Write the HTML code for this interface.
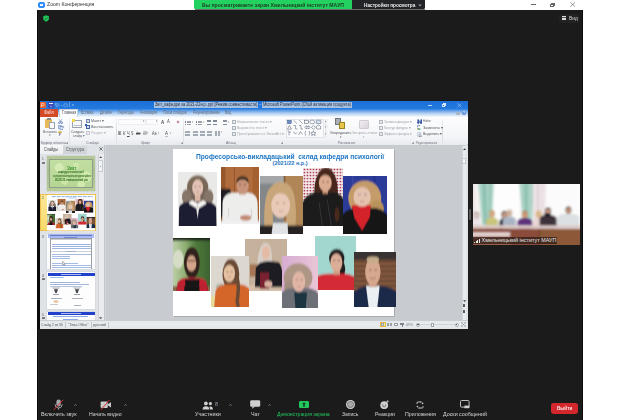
<!DOCTYPE html>
<html><head><meta charset="utf-8">
<style>
*{margin:0;padding:0;box-sizing:border-box}
html,body{width:620px;height:420px;overflow:hidden;background:#fff;font-family:"Liberation Sans",sans-serif;position:relative;-webkit-font-smoothing:antialiased}
.a{position:absolute}
.t{position:absolute;white-space:nowrap;line-height:1;transform-origin:0 0}
</style></head><body>
<div id="wrap" style="position:absolute;left:0;top:0;width:620px;height:420px"><div class="a" style="left:38.00px;top:2.00px;width:6.50px;height:6.00px;background:#2d8cff;border-radius:2px"></div>
<div class="a" style="left:39.60px;top:4.00px;width:2.60px;height:2.00px;background:#fff;border-radius:0.6px"></div>
<div class="a" style="left:42.20px;top:4.30px;width:1.10px;height:1.40px;background:#fff"></div>
<div class="t" style="left:46.70px;top:2.03px;font-size:5.87px;color:#333;transform:scaleX(0.875);">Zoom Конференция</div><div class="a" style="left:37.00px;top:10.00px;width:546.00px;height:410.00px;background:#1b1b1b;border-left:1px solid #0b0b0b;border-right:1px solid #0b0b0b"></div>
<div class="a" style="left:193.90px;top:0.00px;width:157.90px;height:9.00px;background:#23d160;border-bottom-left-radius:1.5px"></div>
<div class="a" style="left:194.50px;top:9.00px;width:230.30px;height:1.00px;background:#6e6e6e"></div>
<div class="t" style="left:201.90px;top:1.82px;font-size:6.01px;color:#1d3b22;transform:scaleX(0.856);font-weight:bold">Вы просматриваете экран Хмельницкий інститут МАУП</div><div class="a" style="left:351.80px;top:0.00px;width:73.00px;height:9.00px;background:#232427;border-bottom-right-radius:1.5px"></div>
<div class="t" style="left:363.90px;top:1.82px;font-size:6.01px;color:#ececec;transform:scaleX(0.785);font-weight:bold">Настройки просмотра</div><svg class="a" style="left:417.5px;top:3.5px" width="4" height="3"><path d="M0.3 0.5 L3.7 0.5 L2 2.5Z" fill="#9a9a9a"/></svg>
<div class="a" style="left:531.30px;top:4.30px;width:4.50px;height:0.60px;background:#666"></div>
<div class="a" style="left:550.30px;top:3.60px;width:3.70px;height:3.20px;border:0.6px solid #666"></div>
<div class="a" style="left:551.30px;top:2.80px;width:3.70px;height:3.00px;border-top:0.6px solid #666;border-right:0.6px solid #666"></div>
<svg class="a" style="left:569.8px;top:2.2px" width="5.4" height="5.0"><path d="M0.3 0.3 L5.1 4.7 M5.1 0.3 L0.3 4.7" stroke="#666" stroke-width="0.65"/></svg>
<svg class="a" style="left:42.5px;top:14.8px" width="6.2" height="7"><path d="M3.1 0.2 L6 1.3 L5.8 4.2 Q5 6 3.1 6.8 Q1.2 6 0.4 4.2 L0.2 1.3Z" fill="#22c25a"/><path d="M1.9 3.6 L2.9 4.5 L4.4 2.6" stroke="#0e5a25" stroke-width="0.6" fill="none"/></svg>
<div class="a" style="left:559.00px;top:13.50px;width:19.70px;height:9.70px;background:#222222;border-radius:3px"></div>
<div class="a" style="left:561.90px;top:15.70px;width:4.20px;height:4.60px;background:#dedede"></div>
<div class="a" style="left:561.90px;top:17.00px;width:4.20px;height:0.50px;background:#555"></div>
<div class="t" style="left:568.70px;top:15.22px;font-size:6.01px;color:#d4d4d4;transform:scaleX(0.801);">Вид</div><div class="a" style="left:38.00px;top:100.80px;width:1.70px;height:227.80px;background:#0c0c0c"></div>
<div class="a" style="left:39.70px;top:100.80px;width:428.30px;height:227.80px;background:#c8cace"></div>
<div class="a" style="left:39.70px;top:100.80px;width:428.30px;height:16.20px;background:linear-gradient(#1b6ed6 0,#237ade 7.6px,#3f8be2 8.5px,#a9c9f0 12px,#eef4fb 15.5px,#fafcfe 16.2px)"></div>
<div class="a" style="left:40.30px;top:102.00px;width:5.30px;height:5.60px;background:#e8632e;border-radius:0.5px"></div>
<svg class="a" style="left:41.2px;top:102.8px" width="3.6" height="4.2" viewBox="0 0 3.6 4.2"><path d="M0.6 4 L0.6 0.4 L2 0.4 Q3.2 0.4 3.2 1.5 Q3.2 2.6 2 2.6 L0.6 2.6" stroke="#fbe0d0" stroke-width="0.7" fill="none"/></svg>
<div class="a" style="left:48.40px;top:102.20px;width:5.20px;height:5.40px;background:#4050b8;border-radius:0.4px"></div>
<div class="a" style="left:49.40px;top:102.50px;width:3.20px;height:1.90px;background:#e8ecf8"></div>
<div class="a" style="left:49.80px;top:105.60px;width:2.40px;height:1.80px;background:#8090d0"></div>
<svg class="a" style="left:55.4px;top:102.6px" width="5" height="4" viewBox="0 0 5 4"><path d="M1 3.4 Q4.6 3.6 4.2 1.6 Q3.6 0 1.2 1 L0.6 0.2 L0.4 2.2 L2.2 2" fill="none" stroke="#8fb4e4" stroke-width="0.7"/></svg>
<div class="a" style="left:61.00px;top:104.60px;width:1.00px;height:0.60px;background:#7aa6e0"></div>
<svg class="a" style="left:63.2px;top:102.6px" width="5" height="4.6" viewBox="0 0 5 4.6"><circle cx="2.5" cy="2.4" r="1.8" fill="none" stroke="#90b6e6" stroke-width="0.7"/></svg>
<div class="a" style="left:69.40px;top:102.40px;width:0.50px;height:5.00px;background:#6c9ee0"></div>
<div class="t" style="left:71.60px;top:103.56px;font-size:3.35px;color:#dbe8f8;">▾</div><div class="a" style="left:154.40px;top:102.40px;width:103.80px;height:5.40px;background:#a8c2e2"></div>
<div class="t" style="left:155.20px;top:102.76px;font-size:4.89px;color:#2a2f3a;transform:scaleX(0.797);">Звіт_кафедри за 2021-22н.р..ppt [Режим совместимости]</div><div class="a" style="left:262.40px;top:102.40px;width:89.60px;height:5.40px;background:#a8c2e2"></div>
<div class="t" style="left:263.20px;top:102.76px;font-size:4.89px;color:#2a2f3a;transform:scaleX(0.810);">Microsoft PowerPoint (Сбой активации продукта)</div><div class="t" style="left:258.80px;top:101.93px;font-size:5.87px;color:#cfe0f5;transform:scaleX(1.333);">-</div><div class="a" style="left:427.50px;top:105.20px;width:4.00px;height:0.80px;background:#b9d3f3"></div>
<div class="a" style="left:441.70px;top:104.00px;width:3.50px;height:3.20px;border:0.7px solid #d7e6f8"></div>
<div class="a" style="left:442.60px;top:103.30px;width:3.40px;height:3.10px;border-top:0.7px solid #d7e6f8;border-right:0.7px solid #d7e6f8"></div>
<svg class="a" style="left:457.4px;top:103.0px" width="4.8" height="4.6"><path d="M0.3 0.3 L4.5 4.3 M4.5 0.3 L0.3 4.3" stroke="#a9c9ee" stroke-width="0.6"/></svg>
<div class="a" style="left:39.90px;top:108.60px;width:18.40px;height:8.20px;background:#d44a27"></div>
<div class="t" style="left:44.00px;top:110.70px;font-size:4.61px;color:#fbe3da;transform:scaleX(0.882);">Файл</div><div class="a" style="left:59.30px;top:108.60px;width:18.30px;height:8.80px;background:linear-gradient(#fdfdfe,#fbfcfd);border:0.6px solid #c9d3df;border-bottom:none"></div>
<div class="t" style="left:61.50px;top:110.70px;font-size:4.61px;color:#555a60;transform:scaleX(0.809);">Главная</div><div class="t" style="left:81.10px;top:110.70px;font-size:4.61px;color:#666d78;transform:scaleX(0.723);">Вставка</div><div class="t" style="left:99.90px;top:110.70px;font-size:4.61px;color:#666d78;transform:scaleX(0.748);">Дизайн</div><div class="t" style="left:117.90px;top:110.70px;font-size:4.61px;color:#666d78;transform:scaleX(0.735);">Переходы</div><div class="t" style="left:139.60px;top:110.70px;font-size:4.61px;color:#666d78;transform:scaleX(0.781);">Анимация</div><div class="t" style="left:162.80px;top:110.70px;font-size:4.61px;color:#666d78;transform:scaleX(0.743);">Показ слайдов</div><div class="t" style="left:192.60px;top:110.70px;font-size:4.61px;color:#666d78;transform:scaleX(0.747);">Рецензирование</div><div class="t" style="left:225.40px;top:110.70px;font-size:4.61px;color:#666d78;transform:scaleX(0.743);">Вид</div><div class="a" style="left:455.50px;top:111.80px;width:4.00px;height:2.80px;background:#aab4c0;border-radius:2px"></div>
<div class="a" style="left:462.20px;top:110.80px;width:4.20px;height:4.20px;background:#5a8ed8;border-radius:50%"></div>
<div class="t" style="left:463.30px;top:111.09px;font-size:3.91px;color:#f4f8fe;transform:scaleX(0.837);font-weight:bold">?</div><div class="a" style="left:39.70px;top:117.00px;width:428.30px;height:28.00px;background:linear-gradient(#fdfdfe,#f6f7f9 60%,#eef0f3);border-bottom:0.8px solid #c2c6cc"></div>
<div class="a" style="left:39.70px;top:140.20px;width:427.50px;height:4.40px;background:linear-gradient(#eef0f3,#e8ebee)"></div>
<div class="a" style="left:69.30px;top:118.00px;width:0.60px;height:26.50px;background:linear-gradient(#f4f5f7,#d8dce1,#e3e6ea)"></div>
<div class="a" style="left:116.00px;top:118.00px;width:0.60px;height:26.50px;background:linear-gradient(#f4f5f7,#d8dce1,#e3e6ea)"></div>
<div class="a" style="left:183.20px;top:118.00px;width:0.60px;height:26.50px;background:linear-gradient(#f4f5f7,#d8dce1,#e3e6ea)"></div>
<div class="a" style="left:284.90px;top:118.00px;width:0.60px;height:26.50px;background:linear-gradient(#f4f5f7,#d8dce1,#e3e6ea)"></div>
<div class="a" style="left:414.80px;top:118.00px;width:0.60px;height:26.50px;background:linear-gradient(#f4f5f7,#d8dce1,#e3e6ea)"></div>
<div class="a" style="left:442.00px;top:118.00px;width:0.60px;height:26.50px;background:linear-gradient(#f4f5f7,#d8dce1,#e3e6ea)"></div>
<div class="t" style="left:40.50px;top:140.69px;font-size:3.91px;color:#6d747e;transform:scaleX(0.942);">Буфер обмена</div><div class="t" style="left:86.00px;top:140.69px;font-size:3.91px;color:#6d747e;transform:scaleX(0.894);">Слайды</div><div class="t" style="left:141.20px;top:140.69px;font-size:3.91px;color:#6d747e;transform:scaleX(0.708);">Шрифт</div><div class="t" style="left:225.80px;top:140.69px;font-size:3.91px;color:#6d747e;transform:scaleX(0.884);">Абзац</div><div class="t" style="left:337.70px;top:140.69px;font-size:3.91px;color:#6d747e;transform:scaleX(0.879);">Рисование</div><div class="t" style="left:415.80px;top:140.69px;font-size:3.91px;color:#6d747e;transform:scaleX(0.712);">Редактирование</div><div class="a" style="left:66.00px;top:141.80px;width:2.40px;height:2.00px;border-right:0.5px solid #9aa1aa;border-bottom:0.5px solid #9aa1aa"></div>
<div class="a" style="left:180.70px;top:141.80px;width:2.40px;height:2.00px;border-right:0.5px solid #9aa1aa;border-bottom:0.5px solid #9aa1aa"></div>
<div class="a" style="left:281.00px;top:141.80px;width:2.40px;height:2.00px;border-right:0.5px solid #9aa1aa;border-bottom:0.5px solid #9aa1aa"></div>
<div class="a" style="left:411.50px;top:141.80px;width:2.40px;height:2.00px;border-right:0.5px solid #9aa1aa;border-bottom:0.5px solid #9aa1aa"></div>
<div class="a" style="left:45.30px;top:119.00px;width:7.20px;height:9.00px;background:#e6b95a;border-radius:0.8px"></div>
<div class="a" style="left:47.20px;top:118.40px;width:3.40px;height:1.60px;background:#8b8b8b"></div>
<div class="a" style="left:48.80px;top:121.80px;width:5.90px;height:7.00px;background:#fbfbfb;border:0.5px solid #9aa3ad"></div>
<div class="t" style="left:43.30px;top:129.85px;font-size:4.19px;color:#555a60;transform:scaleX(0.783);">Вставить</div><div class="t" style="left:49.30px;top:134.07px;font-size:3.23px;color:#555;">▾</div><svg class="a" style="left:57.8px;top:118.6px" width="5" height="5" viewBox="0 0 5 5"><path d="M1.2 0.3 L3.2 3 M3.8 0.3 L1.8 3" stroke="#5a6f9a" stroke-width="0.6"/><circle cx="1.3" cy="3.8" r="0.9" fill="none" stroke="#3a5bb0" stroke-width="0.6"/><circle cx="3.7" cy="3.8" r="0.9" fill="none" stroke="#3a5bb0" stroke-width="0.6"/></svg>
<svg class="a" style="left:57.6px;top:124.8px" width="5.4" height="5" viewBox="0 0 5.4 5"><rect x="0.3" y="0.3" width="3" height="3.2" fill="#e9eef8" stroke="#5d7cc0" stroke-width="0.5"/><rect x="2" y="1.5" width="3" height="3.2" fill="#dfe8f8" stroke="#3f64b8" stroke-width="0.5"/></svg>
<div class="t" style="left:63.00px;top:125.84px;font-size:2.79px;color:#666;transform:scaleX(0.800);">▾</div><svg class="a" style="left:57.8px;top:130.8px" width="5" height="5" viewBox="0 0 5 5"><path d="M0.5 0.5 L3.5 0.5 L3.5 2 L0.5 2Z" fill="#e6c040" stroke="#a88a20" stroke-width="0.3"/><path d="M2 2 L2 3 L1.4 4.6" stroke="#5a4ab0" stroke-width="0.8"/></svg>
<div class="a" style="left:72.00px;top:120.20px;width:10.20px;height:7.60px;background:#f7f8fa;border:0.6px solid #9aa3ad"></div>
<div class="a" style="left:71.50px;top:118.70px;width:3.80px;height:3.50px;background:#f4d94a"></div>
<div class="a" style="left:74.00px;top:125.00px;width:6.50px;height:1.20px;background:#b7c1cc"></div>
<div class="t" style="left:71.20px;top:129.85px;font-size:4.19px;color:#555a60;transform:scaleX(0.842);">Создать</div><div class="t" style="left:73.00px;top:133.73px;font-size:4.33px;color:#555a60;transform:scaleX(0.721);">слайд ▾</div><div class="a" style="left:85.50px;top:118.60px;width:4.50px;height:4.00px;background:#d4dceb;border:0.5px solid #6f86b6"></div>
<div class="t" style="left:91.20px;top:119.19px;font-size:3.91px;color:#555a60;transform:scaleX(0.905);">Макет ▾</div><div class="a" style="left:85.50px;top:124.60px;width:4.50px;height:4.20px;background:#d4dceb;border:0.5px solid #3f62ac"></div>
<div class="a" style="left:85.20px;top:124.20px;width:1.80px;height:1.60px;background:#2f5fb8"></div>
<div class="t" style="left:91.20px;top:125.09px;font-size:3.91px;color:#555a60;transform:scaleX(0.895);">Восстановить</div><div class="a" style="left:85.50px;top:131.20px;width:4.50px;height:3.80px;background:#eceef1;border:0.5px solid #c5c9cf"></div>
<div class="t" style="left:91.20px;top:131.29px;font-size:3.91px;color:#a9adb3;transform:scaleX(0.894);">Раздел ▾</div><div class="a" style="left:117.50px;top:119.30px;width:28.50px;height:5.30px;background:#fcfcfd;border:0.5px solid #eceef1"></div>
<div class="t" style="left:143.20px;top:120.16px;font-size:3.35px;color:#777;transform:scaleX(0.900);">▾</div><div class="a" style="left:146.20px;top:119.30px;width:12.30px;height:5.30px;background:#fcfcfd;border:0.5px solid #eceef1"></div>
<div class="t" style="left:156.00px;top:120.16px;font-size:3.35px;color:#777;transform:scaleX(0.900);">▾</div><div class="t" style="left:161.00px;top:119.20px;font-size:6.15px;color:#4a4a4a;transform:scaleX(0.721);font-weight:bold">A</div><div class="t" style="left:167.00px;top:120.38px;font-size:4.75px;color:#4a4a4a;transform:scaleX(0.883);">A</div><div class="a" style="left:175.60px;top:119.60px;width:4.80px;height:4.60px;background:radial-gradient(#d98a9a 30%,#bfc6cf 45%,transparent 60%)"></div>
<div class="t" style="left:117.60px;top:130.71px;font-size:5.31px;color:#4a4a4a;transform:scaleX(0.625);font-weight:bold">Ж</div><div class="t" style="left:122.60px;top:130.71px;font-size:5.31px;color:#4a4a4a;transform:scaleX(0.768);font-style:italic">К</div><div class="t" style="left:127.00px;top:130.71px;font-size:5.31px;color:#4a4a4a;transform:scaleX(0.736);text-decoration:underline">Ч</div><div class="t" style="left:130.80px;top:130.71px;font-size:5.31px;color:#4a4a4a;transform:scaleX(0.677);">S</div><div class="t" style="left:135.50px;top:130.71px;font-size:5.31px;color:#4a4a4a;transform:scaleX(0.527);text-decoration:line-through">abc</div><div class="t" style="left:142.50px;top:130.71px;font-size:5.31px;color:#4a4a4a;transform:scaleX(0.600);">AV</div><div class="t" style="left:152.00px;top:130.71px;font-size:5.31px;color:#4a4a4a;transform:scaleX(0.694);">Aa</div><div class="t" style="left:165.00px;top:130.71px;font-size:5.31px;color:#4a4a4a;transform:scaleX(0.846);">A</div><div class="a" style="left:164.60px;top:135.60px;width:3.80px;height:0.80px;background:#b9bec6"></div>
<div class="t" style="left:147.20px;top:131.96px;font-size:3.35px;color:#888;transform:scaleX(0.800);">▾</div><div class="t" style="left:158.20px;top:131.96px;font-size:3.35px;color:#888;transform:scaleX(0.800);">▾</div><div class="t" style="left:170.00px;top:131.96px;font-size:3.35px;color:#888;transform:scaleX(0.800);">▾</div><div class="a" style="left:185.30px;top:120.60px;width:1.00px;height:0.80px;background:#7d8591"></div>
<div class="a" style="left:187.10px;top:120.60px;width:4.40px;height:0.60px;background:#9aa1ab"></div>
<div class="a" style="left:185.30px;top:122.20px;width:1.00px;height:0.80px;background:#7d8591"></div>
<div class="a" style="left:187.10px;top:122.20px;width:4.40px;height:0.60px;background:#9aa1ab"></div>
<div class="a" style="left:185.30px;top:123.80px;width:1.00px;height:0.80px;background:#7d8591"></div>
<div class="a" style="left:187.10px;top:123.80px;width:4.40px;height:0.60px;background:#9aa1ab"></div>
<div class="t" style="left:192.30px;top:120.56px;font-size:3.35px;color:#888;transform:scaleX(0.800);">▾</div><div class="a" style="left:196.20px;top:120.60px;width:1.00px;height:0.80px;background:#7d8591"></div>
<div class="a" style="left:198.00px;top:120.60px;width:4.40px;height:0.60px;background:#9aa1ab"></div>
<div class="a" style="left:196.20px;top:122.20px;width:1.00px;height:0.80px;background:#7d8591"></div>
<div class="a" style="left:198.00px;top:122.20px;width:4.40px;height:0.60px;background:#9aa1ab"></div>
<div class="a" style="left:196.20px;top:123.80px;width:1.00px;height:0.80px;background:#7d8591"></div>
<div class="a" style="left:198.00px;top:123.80px;width:4.40px;height:0.60px;background:#9aa1ab"></div>
<div class="t" style="left:203.20px;top:120.56px;font-size:3.35px;color:#888;transform:scaleX(0.800);">▾</div><div class="a" style="left:207.20px;top:120.40px;width:4.20px;height:4.20px;background:repeating-linear-gradient(#7f8894 0 0.6px,transparent 0.6px 1.4px)"></div>
<div class="a" style="left:213.00px;top:120.40px;width:4.20px;height:4.20px;background:repeating-linear-gradient(#7f8894 0 0.6px,transparent 0.6px 1.4px)"></div>
<div class="a" style="left:223.00px;top:120.40px;width:4.20px;height:4.20px;background:repeating-linear-gradient(#8a929d 0 0.6px,transparent 0.6px 1.4px)"></div>
<div class="t" style="left:227.80px;top:120.56px;font-size:3.35px;color:#888;transform:scaleX(0.800);">▾</div><div class="a" style="left:185.30px;top:131.20px;width:5.00px;height:4.40px;background:repeating-linear-gradient(#a3aab4 0 0.7px,transparent 0.7px 1.5px)"></div>
<div class="a" style="left:192.60px;top:131.20px;width:5.00px;height:4.40px;background:repeating-linear-gradient(#a3aab4 0 0.7px,transparent 0.7px 1.5px)"></div>
<div class="a" style="left:199.90px;top:131.20px;width:5.00px;height:4.40px;background:repeating-linear-gradient(#a3aab4 0 0.7px,transparent 0.7px 1.5px)"></div>
<div class="a" style="left:207.20px;top:131.20px;width:5.00px;height:4.40px;background:repeating-linear-gradient(#a3aab4 0 0.7px,transparent 0.7px 1.5px)"></div>
<div class="a" style="left:215.00px;top:131.20px;width:5.50px;height:4.40px;background:repeating-linear-gradient(90deg,#a3aab4 0 2.2px,transparent 2.2px 3.2px)"></div>
<div class="t" style="left:221.00px;top:131.36px;font-size:3.35px;color:#999;transform:scaleX(0.800);">▾</div><div class="a" style="left:232.00px;top:119.60px;width:4.00px;height:4.00px;background:#e9ebef;border:0.5px solid #aeb4bc"></div>
<div class="t" style="left:237.00px;top:119.89px;font-size:3.91px;color:#a2a7ae;transform:scaleX(0.872);">Направление текста ▾</div><div class="a" style="left:232.00px;top:125.60px;width:4.00px;height:4.00px;background:#e9ebef;border:0.5px solid #aeb4bc"></div>
<div class="t" style="left:237.00px;top:125.89px;font-size:3.91px;color:#a2a7ae;transform:scaleX(0.895);">Выровнять текст ▾</div><div class="a" style="left:232.00px;top:131.60px;width:4.00px;height:4.00px;background:#e9ebef;border:0.5px solid #aeb4bc"></div>
<div class="t" style="left:237.00px;top:131.89px;font-size:3.91px;color:#a2a7ae;transform:scaleX(0.921);">Преобразовать в SmartArt ▾</div><div class="a" style="left:286.40px;top:119.30px;width:37.80px;height:18.50px;background:#fbfbfc;border:0.5px solid #e1e4e8"></div>
<svg class="a" style="left:286.4px;top:119.3px" width="38" height="19" viewBox="0 0 38 19" fill="none" stroke="#44536a" stroke-width="0.5">
<rect x="1.6" y="1.4" width="3.6" height="3.2" fill="#6f8fc4" stroke="#2f4f8a"/>
<path d="M7.5 1.2 L11 4.6 M13 1.2 L16.6 4.6"/>
<rect x="18.5" y="1.2" width="4" height="3.4"/><rect x="24" y="1.2" width="4.4" height="3.4" rx="1.2"/>
<rect x="30.2" y="1.2" width="4.8" height="3.4" rx="0.6" fill="#d6e2f2"/>
<path d="M1.4 10.2 L3.4 6.4 L5.4 10.2Z"/><path d="M7.4 6.6 L9.6 6.6 L9.6 10 L11.4 10"/><path d="M13 6.6 L15 6.6 L15 10 L17 10"/>
<path d="M18.8 8.3 L20.4 6.6 L20.4 7.6 L22.6 7.6 L22.6 6.6 L24.2 8.3 L22.6 10 L22.6 9 L20.4 9 L20.4 10 Z"/>
<path d="M25.4 8.3 L27.4 6.4 L29.4 8.3 L27.4 10.2Z"/><path d="M30.6 10 L30.6 7.2 L32.6 6.2 L34.6 7.2 L34.6 10Z"/>
<path d="M1.6 12 L3 12 L3 16.4 M3 14 L5 12.6"/><path d="M7.4 12.6 Q9.2 16.6 11 13.4"/><path d="M12.6 16 L14.4 12.6 L16.4 15.4"/>
<path d="M19.6 12 Q18.4 14.2 19.6 16.6"/><path d="M23 12 Q24.2 14.2 23 16.6"/>
<path d="M27.4 11.8 L28.2 13.6 L30 13.7 L28.6 14.8 L29.2 16.6 L27.4 15.6 L25.6 16.6 L26.2 14.8 L24.8 13.7 L26.6 13.6Z"/>
</svg>
<div class="a" style="left:324.60px;top:119.30px;width:3.00px;height:18.50px;background:#f3f4f6;border-left:0.5px solid #e1e4e8"></div>
<div class="t" style="left:325.20px;top:119.80px;font-size:3.07px;color:#888;transform:scaleX(0.900);">▴</div><div class="t" style="left:325.20px;top:126.10px;font-size:3.07px;color:#888;transform:scaleX(0.900);">▾</div><div class="t" style="left:325.20px;top:132.60px;font-size:3.07px;color:#888;transform:scaleX(0.900);">▾</div><div class="a" style="left:334.80px;top:118.30px;width:6.20px;height:6.30px;background:#a9aeb6;border:0.5px solid #6f757d"></div>
<div class="a" style="left:338.60px;top:122.20px;width:6.90px;height:6.40px;background:#e8c64a;border:0.5px solid #9c8425"></div>
<div class="t" style="left:330.00px;top:130.95px;font-size:4.19px;color:#555a60;transform:scaleX(0.855);">Упорядочить</div><div class="t" style="left:339.60px;top:135.56px;font-size:3.35px;color:#555;transform:scaleX(0.900);">▾</div><div class="a" style="left:358.70px;top:119.80px;width:10.70px;height:9.70px;background:linear-gradient(135deg,#f1eef2,#d9d4dc);border:0.5px solid #d0cbd4;border-radius:1px"></div>
<div class="t" style="left:352.00px;top:130.95px;font-size:4.19px;color:#a0a4aa;transform:scaleX(0.816);">Экспресс-стили</div><div class="t" style="left:363.00px;top:135.56px;font-size:3.35px;color:#999;transform:scaleX(0.900);">▾</div><div class="a" style="left:379.00px;top:119.80px;width:4.20px;height:4.20px;background:#e6e8ec;border:0.5px solid #b4b9c0"></div>
<div class="t" style="left:384.40px;top:120.09px;font-size:3.91px;color:#a2a7ae;transform:scaleX(0.838);">Заливка фигуры ▾</div><div class="a" style="left:379.00px;top:126.00px;width:4.20px;height:4.20px;background:#e6e8ec;border:0.5px solid #b4b9c0"></div>
<div class="t" style="left:384.40px;top:126.29px;font-size:3.91px;color:#a2a7ae;transform:scaleX(0.875);">Контур фигуры ▾</div><div class="a" style="left:379.00px;top:132.20px;width:4.20px;height:4.20px;background:#e6e8ec;border:0.5px solid #b4b9c0"></div>
<div class="t" style="left:384.40px;top:132.49px;font-size:3.91px;color:#a2a7ae;transform:scaleX(0.774);">Эффекты фигуры ▾</div><svg class="a" style="left:416.6px;top:118.8px" width="5.4" height="5.2" viewBox="0 0 5.4 5.2"><rect x="0.4" y="0.4" width="1.6" height="2.4" fill="#3a5aa8"/><rect x="3.4" y="0.4" width="1.6" height="2.4" fill="#3a5aa8"/><circle cx="1.3" cy="3.6" r="1.2" fill="#2a4a98"/><circle cx="4.1" cy="3.6" r="1.2" fill="#2a4a98"/><rect x="2" y="1.6" width="1.4" height="1.2" fill="#5a7ac0"/></svg>
<div class="t" style="left:423.00px;top:119.49px;font-size:3.91px;color:#555a60;transform:scaleX(0.672);">Найти</div><svg class="a" style="left:416.6px;top:125.4px" width="5.4" height="5.2" viewBox="0 0 5.4 5.2"><path d="M0.4 2.4 L0.4 0.6 L3 0.6" stroke="#4a6ab0" stroke-width="0.6" fill="none"/><path d="M2.4 0 L3.2 0.6 L2.4 1.2" fill="#4a6ab0"/><text x="0.2" y="5" font-size="3" font-family="Liberation Sans" font-weight="bold" fill="#2f7a2f">ac</text></svg>
<div class="t" style="left:423.00px;top:125.69px;font-size:3.91px;color:#555a60;transform:scaleX(0.969);">Заменить ▾</div><svg class="a" style="left:416.8px;top:131.6px" width="5" height="5.2" viewBox="0 0 5 5.2"><rect x="0.4" y="0.6" width="3.2" height="3.6" fill="#eef2f8" stroke="#6a86c0" stroke-width="0.5" stroke-dasharray="0.8 0.5"/><path d="M2.2 1.8 L2.2 5 L3 4.2 L3.6 5.1 L4.2 4.8 L3.6 3.9 L4.6 3.9Z" fill="#fff" stroke="#333" stroke-width="0.35"/></svg>
<div class="t" style="left:423.00px;top:131.89px;font-size:3.91px;color:#555a60;transform:scaleX(0.900);">Выделить ▾</div><div class="a" style="left:39.70px;top:145.00px;width:64.80px;height:176.00px;background:#dfe2e6"></div>
<div class="a" style="left:39.70px;top:145.00px;width:23.30px;height:9.30px;background:linear-gradient(#f7f8fa,#eceef1)"></div>
<div class="a" style="left:63.00px;top:145.60px;width:24.00px;height:8.70px;background:linear-gradient(#d5d9de,#cfd3d8)"></div>
<div class="t" style="left:44.00px;top:147.34px;font-size:5.03px;color:#444;transform:scaleX(0.750);">Слайды</div><div class="t" style="left:66.40px;top:147.34px;font-size:5.03px;color:#555;transform:scaleX(0.756);">Структура</div><svg class="a" style="left:99.2px;top:147.4px" width="3.8" height="3.8"><path d="M0.3 0.3 L3.5 3.5 M3.5 0.3 L0.3 3.5" stroke="#444" stroke-width="0.7"/></svg>
<div class="a" style="left:97.60px;top:154.30px;width:6.60px;height:166.70px;background:#e9ebee;border-left:0.5px solid #d0d4d9"></div>
<svg class="a" style="left:99.2px;top:155.6px" width="3.4" height="2.4"><path d="M0 2.2 L1.7 0.2 L3.4 2.2Z" fill="#555"/></svg>
<div class="a" style="left:98.10px;top:160.00px;width:5.30px;height:12.00px;background:linear-gradient(90deg,#fbfbfc,#eef0f3);border:0.5px solid #c7ccd2;border-radius:0.8px"></div>
<div class="a" style="left:100.20px;top:165.60px;width:1.10px;height:0.80px;background:#999"></div>
<svg class="a" style="left:99.2px;top:317.4px" width="3.4" height="2.4"><path d="M0 0.2 L1.7 2.2 L3.4 0.2Z" fill="#555"/></svg>
<div class="a" style="left:104.20px;top:145.00px;width:1.80px;height:176.00px;background:#d2d5da;border-left:0.5px solid #c2c6cc"></div>
<div class="a" style="left:40.30px;top:194.20px;width:55.90px;height:36.60px;background:linear-gradient(#fde89a,#f9d86a);border:0.5px solid #ecc24e"></div>
<div class="t" style="left:42.20px;top:156.99px;font-size:3.91px;color:#444;transform:scaleX(0.823);">1</div><div class="t" style="left:42.20px;top:195.99px;font-size:3.91px;color:#444;transform:scaleX(0.823);">2</div><div class="t" style="left:42.20px;top:234.99px;font-size:3.91px;color:#444;transform:scaleX(0.823);">3</div><div class="t" style="left:42.20px;top:273.99px;font-size:3.91px;color:#444;transform:scaleX(0.823);">4</div><div class="t" style="left:42.20px;top:312.99px;font-size:3.91px;color:#444;transform:scaleX(0.823);">5</div><div class="a" style="left:41.80px;top:161.50px;width:2.80px;height:2.00px;border:0.5px solid #777;border-radius:0.6px"></div>
<div class="a" style="left:41.80px;top:277.50px;width:2.80px;height:2.00px;border:0.5px solid #777;border-radius:0.6px"></div>
<div class="a" style="left:41.80px;top:316.50px;width:2.80px;height:2.00px;border:0.5px solid #777;border-radius:0.6px"></div>
<div class="a" style="left:47.00px;top:155.50px;width:48.00px;height:35.50px;background:linear-gradient(#b4c89a,#a9bf8c 50%,#b8cc98);box-shadow:0 0 0.8px #7a8a70"></div>
<div class="a" style="left:49.00px;top:158.50px;width:44.00px;height:29.50px;background:radial-gradient(circle at 22% 28%,#d4ecb4 0,#d4ecb4 11%,transparent 12%),radial-gradient(circle at 62% 22%,#d0e8ae 0,#d0e8ae 9%,transparent 10%),radial-gradient(circle at 86% 62%,#cfe8ac 0,#cfe8ac 13%,transparent 14%),radial-gradient(circle at 35% 78%,#cce6a8 0,#cce6a8 10%,transparent 11%),radial-gradient(circle at 74% 90%,#d2eab0 0,#d2eab0 9%,transparent 10%),linear-gradient(#c2dea2,#b6d694);border:0.6px solid #8e9e8a"></div>
<div class="t" style="left:66.50px;top:165.54px;font-size:5.03px;color:#3a962a;transform:scaleX(0.943);font-weight:bold">Звіт</div><div class="t" style="left:58.00px;top:171.16px;font-size:3.35px;color:#2c6e1c;transform:scaleX(0.800);font-weight:bold">кафедри психології</div><div class="t" style="left:53.00px;top:174.96px;font-size:3.35px;color:#2c6e1c;transform:scaleX(0.511);font-weight:bold">за результатами науково-методичної роботи</div><div class="t" style="left:55.00px;top:178.56px;font-size:3.35px;color:#2c6e1c;transform:scaleX(0.857);font-weight:bold">2021/22 навчальний рік</div><div class="a" style="left:47.00px;top:195.00px;width:48.00px;height:35.30px;background:#fdfdfd"></div>
<div class="a" style="left:53.50px;top:197.40px;width:37.50px;height:1.20px;background:#8fb6de"></div>
<div class="a" style="left:63.80px;top:199.40px;width:11.80px;height:1.00px;background:#a9c8e8"></div>
<div class="a" style="left:47.00px;top:233.70px;width:48.00px;height:35.60px;background:#fbfbfd;box-shadow:0 0 0.8px #9aa0a8"></div>
<div class="a" style="left:47.90px;top:234.40px;width:46.60px;height:3.80px;background:#a9b8f0"></div>
<div class="a" style="left:50.00px;top:235.00px;width:42.00px;height:0.70px;background:#5d76c8"></div>
<div class="a" style="left:64.00px;top:236.60px;width:13.00px;height:0.70px;background:#6f86d0"></div>
<div class="a" style="left:50.20px;top:238.20px;width:41.50px;height:31.10px;background:#fff;border:0.6px solid #9a9ea6;border-bottom:none"></div>
<div class="a" style="left:50.80px;top:238.80px;width:40.30px;height:1.00px;background:#c9ccd2"></div>
<div class="a" style="left:51.50px;top:240.60px;width:39.00px;height:9.40px;background:repeating-linear-gradient(#fff 0 0.7px,#9fb6e2 0.7px 1.5px,#fff 1.5px 2.2px)"></div>
<div class="a" style="left:50.80px;top:250.60px;width:40.30px;height:1.90px;background:#cfd2d8"></div>
<div class="a" style="left:66.00px;top:251.00px;width:10.00px;height:1.00px;background:#a5b2cc"></div>
<div class="a" style="left:51.50px;top:253.20px;width:39.00px;height:15.60px;background:repeating-linear-gradient(#fff 0 0.7px,#a6bbe4 0.7px 1.5px,#fff 1.5px 2.3px)"></div>
<div class="a" style="left:70.00px;top:256.00px;width:21.00px;height:2.50px;background:#fff"></div>
<div class="a" style="left:78.00px;top:262.00px;width:13.00px;height:2.20px;background:#fff"></div>
<svg class="a" style="left:62.4px;top:261.0px" width="4" height="5"><path d="M0.3 0.3 L0.3 4 L1.2 3.2 L2 4.6 L2.7 4.2 L2 3 L3.2 3 Z" fill="#f4f4f4" stroke="#555" stroke-width="0.4"/></svg>
<div class="a" style="left:47.00px;top:272.20px;width:48.00px;height:36.60px;background:#fdfdfd;box-shadow:0 0 0.8px #9aa0a8"></div>
<div class="a" style="left:47.50px;top:273.10px;width:47.00px;height:2.50px;background:#2242cc"></div>
<div class="a" style="left:61.00px;top:273.70px;width:20.00px;height:1.30px;background:#aab8ee"></div>
<div class="a" style="left:49.50px;top:276.60px;width:14.50px;height:0.70px;background:#9fc0ea"></div>
<div class="a" style="left:49.50px;top:278.00px;width:39.50px;height:7.60px;background:repeating-linear-gradient(#fff 0 0.6px,#a2b4dc 0.6px 1.3px,#fff 1.3px 1.9px)"></div>
<div class="a" style="left:80.00px;top:282.00px;width:9.00px;height:2.40px;background:#fdfdfd"></div>
<div class="a" style="left:50.00px;top:285.60px;width:32.00px;height:0.80px;background:#b8c4dc"></div>
<svg class="a" style="left:51.20px;top:287.3px" width="10" height="6.4" viewBox="0 0 10 6.4"><path d="M0.5 0.3 L9.5 0.3 L6 3.6 L5.6 6.2 L4.4 6.2 L4 3.6Z" fill="#c5c8cc"/><path d="M3 2.2 L7 2.2 L5.8 6 L4.2 6Z" fill="#4a4c50"/></svg>
<div class="a" style="left:53.40px;top:294.20px;width:5.60px;height:0.60px;background:#9aa2b0"></div>
<div class="a" style="left:50.70px;top:296.00px;width:11.00px;height:3.60px;background:repeating-linear-gradient(#fff 0 0.5px,#a9b0bc 0.5px 1.1px,#fff 1.1px 1.7px)"></div>
<svg class="a" style="left:72.20px;top:287.3px" width="10" height="6.4" viewBox="0 0 10 6.4"><path d="M0.5 0.3 L9.5 0.3 L6 3.6 L5.6 6.2 L4.4 6.2 L4 3.6Z" fill="#c5c8cc"/><path d="M3 2.2 L7 2.2 L5.8 6 L4.2 6Z" fill="#4a4c50"/></svg>
<div class="a" style="left:74.40px;top:294.20px;width:5.60px;height:0.60px;background:#9aa2b0"></div>
<div class="a" style="left:71.70px;top:296.00px;width:11.00px;height:3.60px;background:repeating-linear-gradient(#fff 0 0.5px,#a9b0bc 0.5px 1.1px,#fff 1.1px 1.7px)"></div>
<div class="a" style="left:53.00px;top:300.30px;width:6.20px;height:3.10px;border-radius:50%;background:radial-gradient(#e2b890,#f2dcc8 70%,transparent 72%)"></div>
<div class="a" style="left:50.00px;top:304.20px;width:8.00px;height:0.60px;background:#c4c9d2"></div>
<div class="a" style="left:74.00px;top:305.00px;width:6.90px;height:0.60px;background:#aab0ba"></div>
<div class="a" style="left:47.00px;top:311.60px;width:48.00px;height:9.40px;background:#fdfdfd;box-shadow:0 0 0.8px #9aa0a8"></div>
<div class="a" style="left:47.50px;top:312.40px;width:47.00px;height:2.60px;background:#2242cc"></div>
<div class="a" style="left:61.00px;top:313.00px;width:20.00px;height:1.40px;background:#aab8ee"></div>
<div class="a" style="left:53.00px;top:316.10px;width:35.00px;height:0.80px;background:#8faae6"></div>
<div class="a" style="left:63.00px;top:319.10px;width:15.00px;height:0.80px;background:#8faae6"></div>
<div class="a" style="left:106.00px;top:145.60px;width:356.00px;height:174.40px;background:#c8cbcf"></div>
<div class="a" style="left:462.00px;top:145.60px;width:4.20px;height:174.40px;background:#e8eaed;border-left:0.5px solid #d3d7dc"></div>
<svg class="a" style="left:462.6px;top:148.2px" width="3.2" height="2.2"><path d="M0 2 L1.6 0.2 L3.2 2Z" fill="#444"/></svg>
<div class="a" style="left:462.40px;top:157.80px;width:3.50px;height:5.80px;background:#fafbfc;border:0.5px solid #c4c9cf"></div>
<svg class="a" style="left:462.6px;top:300.0px" width="3.2" height="2.2"><path d="M0 0.2 L1.6 2 L3.2 0.2Z" fill="#444"/></svg>
<div class="a" style="left:463.00px;top:304.20px;width:2.20px;height:3.00px;background:#555;border-radius:0.6px"></div>
<div class="a" style="left:463.00px;top:309.60px;width:2.20px;height:3.00px;background:#555;border-radius:0.6px"></div>
<div class="a" style="left:466.20px;top:145.00px;width:1.80px;height:183.60px;background:#dfe3e8"></div>
<div class="a" style="left:39.70px;top:320.00px;width:428.30px;height:8.60px;background:linear-gradient(#e3e6ea,#e9ecef 40%,#e1e4e8);border-top:0.6px solid #c9cdd2"></div>
<div class="t" style="left:41.10px;top:323.05px;font-size:4.19px;color:#555;transform:scaleX(0.798);">Слайд 2 из 36</div><div class="a" style="left:64.90px;top:321.60px;width:0.50px;height:6.40px;background:#c3c7cc"></div>
<div class="t" style="left:68.20px;top:323.05px;font-size:4.19px;color:#555;transform:scaleX(0.821);">"Тема Office"</div><div class="a" style="left:90.60px;top:321.60px;width:0.50px;height:6.40px;background:#c3c7cc"></div>
<div class="t" style="left:92.70px;top:323.05px;font-size:4.19px;color:#555;transform:scaleX(0.872);">русский</div><div class="a" style="left:107.80px;top:321.60px;width:0.50px;height:6.40px;background:#c3c7cc"></div>
<div class="a" style="left:379.60px;top:321.60px;width:6.00px;height:5.80px;background:#fbe9a8;border:0.6px solid #e9b93a"></div>
<div class="a" style="left:380.90px;top:322.90px;width:3.40px;height:3.20px;background:#fdfdfd;border:0.5px solid #9aa0a7"></div>
<div class="a" style="left:387.20px;top:322.80px;width:4.60px;height:3.40px;background:repeating-linear-gradient(90deg,#9aa0a7 0 2px,transparent 2px 2.6px),repeating-linear-gradient(#e3e6ea 0 1.4px,transparent 1.4px 1.9px)"></div>
<div class="a" style="left:394.20px;top:322.80px;width:3.60px;height:3.40px;background:#f1f2f4;border:0.5px solid #9aa0a7"></div>
<div class="a" style="left:400.40px;top:322.60px;width:4.00px;height:2.40px;background:#7d838a"></div>
<div class="a" style="left:402.00px;top:325.00px;width:0.80px;height:1.60px;background:#7d838a"></div>
<div class="t" style="left:406.30px;top:323.09px;font-size:3.91px;color:#777;transform:scaleX(0.920);">69%</div><div class="a" style="left:415.80px;top:324.30px;width:39.00px;height:0.40px;background:#cfd3d8"></div>
<div class="a" style="left:416.00px;top:322.60px;width:4.00px;height:4.00px;background:#f3f4f6;border:0.5px solid #aab0b7;border-radius:50%"></div>
<div class="a" style="left:417.20px;top:324.40px;width:1.60px;height:0.50px;background:#666"></div>
<div class="a" style="left:431.30px;top:322.50px;width:2.40px;height:4.20px;background:#fafbfc;border:0.5px solid #a0a6ad;border-radius:0.5px"></div>
<div class="a" style="left:454.70px;top:322.60px;width:4.00px;height:4.00px;background:#f3f4f6;border:0.5px solid #aab0b7;border-radius:50%"></div>
<div class="a" style="left:455.90px;top:324.40px;width:1.60px;height:0.50px;background:#666"></div>
<div class="a" style="left:456.45px;top:323.80px;width:0.50px;height:1.70px;background:#666"></div>
<svg class="a" style="left:461px;top:322.2px" width="5" height="5" viewBox="0 0 5 5"><path d="M0.4 1.6 L0.4 0.4 L1.6 0.4 M3.4 0.4 L4.6 0.4 L4.6 1.6 M4.6 3.4 L4.6 4.6 L3.4 4.6 M1.6 4.6 L0.4 4.6 L0.4 3.4 M1.2 1.2 L3.8 3.8 M3.8 1.2 L1.2 3.8" stroke="#6a7078" stroke-width="0.5" fill="none"/></svg>
<svg width="0" height="0" style="position:absolute"><filter id="pb" x="-10%" y="-10%" width="120%" height="120%"><feGaussianBlur stdDeviation="1.8"/></filter></svg>
<div class="a" style="left:173.60px;top:150.10px;width:221.30px;height:166.60px;background:#a9acb1"></div>
<div class="a" style="left:173.00px;top:149.30px;width:221.00px;height:166.50px;overflow:visible">
<div class="a" style="left:0;top:0;width:221.00px;height:166.50px;background:#fff"></div>
<div class="a" style="left:4.70px;top:22.70px;width:39.30px;height:54.20px;z-index:1;overflow:hidden"><svg width="100%" height="100%" viewBox="0 0 100 100" preserveAspectRatio="none" style="display:block"><g filter="url(#pb)"><rect x="-5" y="-5" width="110" height="110" fill="#e9e9e7"/><ellipse cx="50" cy="28" rx="27" ry="22" fill="#7a6856"/><ellipse cx="50" cy="44" rx="36" ry="16" fill="#76665a"/><ellipse cx="22" cy="46" rx="12" ry="14" fill="#86766a"/><ellipse cx="78" cy="46" rx="12" ry="14" fill="#86766a"/><rect x="43" y="40" width="14" height="16" fill="#d8b4a4"/><path d="M2 104 L3 64 Q8 56 26 55 L74 55 Q92 57 97 64 L98 104Z" fill="#1a1e32"/><path d="M26 57 L47 67 L50 62 L53 67 L74 57 L64 52 L50 58 L36 52Z" fill="#f6f6f4"/><path d="M46 64 L50 86 L54 64Z" fill="#ececec"/><ellipse cx="50" cy="29" rx="14" ry="15" fill="#e2c2b2"/><path d="M42 27 L47 27 M53 27 L58 27" stroke="#7a5a50" stroke-width="1.4"/><path d="M46 37 L54 37" stroke="#b87a7a" stroke-width="1.4"/></g></svg></div>
<div class="a" style="left:47.90px;top:17.50px;width:38.50px;height:57.10px;z-index:1;overflow:hidden"><svg width="100%" height="100%" viewBox="0 0 100 100" preserveAspectRatio="none" style="display:block"><g filter="url(#pb)"><rect x="-5" y="-5" width="110" height="110" fill="#b06c3c"/><rect x="-5" y="-5" width="16" height="110" fill="#94562c"/><rect x="34" y="-5" width="2" height="60" fill="#8a5230"/><rect x="82" y="-5" width="23" height="110" fill="#a4602f"/><rect x="-5" y="38" width="30" height="50" rx="4" fill="#1c1f22"/><path d="M3 97 L4 62 Q6 47 30 45 L72 45 Q93 47 95 62 L96 97Z" fill="#ededec"/><path d="M20 72 L20 88 M78 72 L80 88" stroke="#cacaca" stroke-width="2"/><ellipse cx="64" cy="89" rx="15" ry="5" fill="#c28a72"/><rect x="47" y="40" width="17" height="8" fill="#c08a70"/><ellipse cx="56" cy="33" rx="16" ry="14" fill="#c8957a"/><path d="M40 28 Q40 16 56 16 Q72 16 72 28 Q64 22 56 22 Q48 22 40 28Z" fill="#2e2620"/><path d="M47 31 L53 31 M59 31 L65 31" stroke="#5a3a30" stroke-width="1.6"/><rect x="-5" y="95" width="110" height="10" fill="#f1f1f1"/></g></svg></div>
<div class="a" style="left:86.70px;top:26.40px;width:43.00px;height:58.80px;z-index:1;overflow:hidden"><svg width="100%" height="100%" viewBox="0 0 100 100" preserveAspectRatio="none" style="display:block"><g filter="url(#pb)"><rect x="-5" y="-5" width="110" height="110" fill="#84878a"/><rect x="-5" y="-5" width="60" height="18" fill="#a4a6a8"/><rect x="55" y="-5" width="50" height="110" fill="#b08656"/><rect x="56" y="-5" width="3" height="80" fill="#7e5a3a"/><path d="M10 88 Q8 40 20 24 Q34 8 52 10 Q74 12 80 34 Q86 60 82 86 L62 86 L62 40 L30 40 L30 88Z" fill="#c8a67a"/><ellipse cx="48" cy="50" rx="22" ry="21" fill="#e9cab8"/><path d="M24 36 Q40 24 72 34 L70 26 Q50 14 26 28Z" fill="#c8a67a"/><path d="M37 46 L44 46 M52 46 L59 46" stroke="#9a7a6a" stroke-width="1.4"/><path d="M44 60 L54 60" stroke="#c08a88" stroke-width="1.4"/><path d="M-5 105 L-5 84 L100 84 L105 105Z" fill="#262222"/><path d="M26 105 L30 80 L64 80 L66 105Z" fill="#dfe3e6"/></g></svg></div>
<div class="a" style="left:129.70px;top:18.40px;width:40.50px;height:58.10px;z-index:1;overflow:hidden"><svg width="100%" height="100%" viewBox="0 0 100 100" preserveAspectRatio="none" style="display:block"><defs><pattern id="dots" patternUnits="userSpaceOnUse" width="7.4" height="5.2"><rect width="7.4" height="5.2" fill="#f4efef"/><rect x="1.6" y="1.2" width="4.0" height="2.8" fill="#b23a4e"/></pattern></defs><rect x="-5" y="-5" width="110" height="110" fill="url(#dots)"/><g filter="url(#pb)"><ellipse cx="57" cy="40" rx="29" ry="41" fill="#46281b"/><path d="M-5 105 L-2 62 Q5 46 30 42 L82 42 Q100 48 104 62 L104 105Z" fill="#1c1c1e"/><path d="M40 60 L48 100 M60 55 L70 100" stroke="#3a3a3c" stroke-width="2"/><ellipse cx="84" cy="80" rx="6" ry="12" fill="#4a2a1c"/><rect x="48" y="34" width="14" height="10" fill="#c89478"/><ellipse cx="55" cy="26" rx="16" ry="14" fill="#dcac90"/><path d="M47 24 L53 24 M58 24 L64 24" stroke="#5a3a30" stroke-width="1.4"/></g></svg></div>
<div class="a" style="left:170.20px;top:26.40px;width:43.50px;height:58.10px;z-index:1;overflow:hidden"><svg width="100%" height="100%" viewBox="0 0 100 100" preserveAspectRatio="none" style="display:block"><g filter="url(#pb)"><rect x="-5" y="-5" width="110" height="110" fill="#2c3b98"/><rect x="20" y="-5" width="4" height="110" fill="#3848a4"/><rect x="70" y="-5" width="5" height="110" fill="#24338e"/><ellipse cx="50" cy="38" rx="38" ry="30" fill="#c49c6a"/><ellipse cx="78" cy="56" rx="16" ry="14" fill="#b8925c"/><path d="M-5 105 L-3 68 Q8 56 30 55 L75 55 Q96 58 104 70 L104 105Z" fill="#141418"/><path d="M20 50 L64 50 L62 70 L44 94 L26 72Z" fill="#d4202c"/><ellipse cx="44" cy="36" rx="20" ry="17" fill="#e4c2ae"/><path d="M34 32 L41 32 M48 32 L55 32" stroke="#7a6a80" stroke-width="1.4"/><path d="M39 44 L49 44" stroke="#c07070" stroke-width="1.5"/></g></svg></div>
<div class="a" style="left:-0.40px;top:88.80px;width:37.70px;height:52.90px;z-index:1;overflow:hidden"><svg width="100%" height="100%" viewBox="0 0 100 100" preserveAspectRatio="none" style="display:block"><g filter="url(#pb)"><defs><linearGradient id="g6" x1="0" x2="1"><stop offset="0" stop-color="#c2d2ae"/><stop offset="0.35" stop-color="#8eae72"/><stop offset="0.6" stop-color="#4e7a3c"/><stop offset="1" stop-color="#3a5e2e"/></linearGradient></defs><rect x="-5" y="-5" width="110" height="110" fill="url(#g6)"/><rect x="-5" y="-5" width="110" height="10" fill="#1e281e"/><ellipse cx="14" cy="40" rx="14" ry="18" fill="#d6dcc6"/><ellipse cx="50" cy="47" rx="21" ry="30" fill="#33241c"/><path d="M10 105 L12 84 Q20 75 35 75 L68 75 Q88 77 90 86 L92 105Z" fill="#c02232"/><path d="M32 78 L70 78 L68 105 L34 105Z" fill="#151515"/><rect x="-5" y="91" width="110" height="14" fill="#8a6a4a"/><rect x="10" y="91" width="82" height="14" fill="#151515"/><rect x="10" y="91" width="20" height="14" fill="#c02232"/><rect x="70" y="91" width="22" height="14" fill="#c02232"/><ellipse cx="49" cy="48" rx="13" ry="15" fill="#d4a48a"/><path d="M38 43 L60 43" stroke="#2a2020" stroke-width="2"/></g></svg></div>
<div class="a" style="left:37.70px;top:106.80px;width:38.20px;height:51.00px;z-index:2;overflow:hidden"><svg width="100%" height="100%" viewBox="0 0 100 100" preserveAspectRatio="none" style="display:block"><g filter="url(#pb)"><rect x="-5" y="-5" width="110" height="110" fill="#dcd7cf"/><rect x="-5" y="78" width="22" height="27" fill="#e6da9c"/><ellipse cx="25" cy="60" rx="13" ry="6" fill="#b4b8aa"/><ellipse cx="52" cy="36" rx="22" ry="30" fill="#6a4a34"/><path d="M8 105 L12 68 Q18 56 40 56 L80 56 Q102 60 104 72 L104 105Z" fill="#d4662a"/><path d="M62 30 Q76 50 70 80 Q66 95 74 100" stroke="#6a4a34" stroke-width="9" fill="none"/><ellipse cx="48" cy="34" rx="15" ry="17" fill="#e6c2a2"/><path d="M40 31 L46 31 M51 31 L57 31" stroke="#6a4a3a" stroke-width="1.4"/><path d="M43 41 L53 41" stroke="#b07060" stroke-width="1.4"/></g></svg></div>
<div class="a" style="left:72.00px;top:89.30px;width:41.80px;height:52.40px;z-index:1;overflow:hidden"><svg width="100%" height="100%" viewBox="0 0 100 100" preserveAspectRatio="none" style="display:block"><g filter="url(#pb)"><rect x="-5" y="-5" width="110" height="110" fill="#c6b29c"/><rect x="12" y="48" width="16" height="24" fill="#a67656"/><rect x="-5" y="88" width="110" height="17" fill="#d6c0aa"/><path d="M30 60 Q28 20 45 8 Q62 4 64 30 Q66 50 58 60Z" fill="#d8d0c8"/><path d="M24 92 L26 54 Q34 42 56 42 L80 44 Q92 52 90 92Z" fill="#1e1a22"/><ellipse cx="50" cy="26" rx="10" ry="13" fill="#e4bca6"/><rect x="36" y="64" width="22" height="31" fill="#7a2430"/><ellipse cx="56" cy="86" rx="10" ry="6" fill="#d8b0a0"/></g></svg></div>
<div class="a" style="left:108.80px;top:106.80px;width:35.80px;height:51.50px;z-index:3;overflow:hidden"><svg width="100%" height="100%" viewBox="0 0 100 100" preserveAspectRatio="none" style="display:block"><g filter="url(#pb)"><defs><linearGradient id="g9" x1="0" x2="1"><stop offset="0" stop-color="#d6acd2"/><stop offset="1" stop-color="#e9c6d6"/></linearGradient></defs><rect x="-5" y="-5" width="110" height="110" fill="url(#g9)"/><ellipse cx="45" cy="42" rx="40" ry="28" fill="#ae9686"/><ellipse cx="20" cy="60" rx="14" ry="14" fill="#a48e80"/><path d="M-5 105 L-3 72 Q10 62 35 62 L70 62 Q96 64 104 76 L104 105Z" fill="#6e7078"/><path d="M34 70 L70 70 L66 105 L38 105Z" fill="#1e3440"/><ellipse cx="47" cy="50" rx="18" ry="20" fill="#dfb6a6"/><path d="M38 46 L45 46 M51 46 L58 46" stroke="#7a5a50" stroke-width="1.4"/><path d="M43 60 L53 60" stroke="#c07080" stroke-width="1.6"/></g></svg></div>
<div class="a" style="left:142.40px;top:87.10px;width:40.30px;height:53.20px;z-index:1;overflow:hidden"><svg width="100%" height="100%" viewBox="0 0 100 100" preserveAspectRatio="none" style="display:block"><g filter="url(#pb)"><rect x="-5" y="-5" width="110" height="110" fill="#a2d7cf"/><ellipse cx="54" cy="42" rx="19" ry="18" fill="#221a1a"/><ellipse cx="66" cy="62" rx="9" ry="14" fill="#221a1a"/><path d="M-5 105 L-3 80 Q8 71 35 71 L75 71 Q98 73 104 82 L104 105Z" fill="#d42a36"/><rect x="46" y="60" width="16" height="13" fill="#cc9a84"/><ellipse cx="53" cy="50" rx="15" ry="17" fill="#dcae98"/><path d="M45 46 L51 46 M56 46 L62 46" stroke="#3a2a2a" stroke-width="1.4"/></g></svg></div>
<div class="a" style="left:180.60px;top:102.60px;width:42.80px;height:54.80px;z-index:2;overflow:hidden"><svg width="100%" height="100%" viewBox="0 0 100 100" preserveAspectRatio="none" style="display:block"><g filter="url(#pb)"><defs><pattern id="wood" patternUnits="userSpaceOnUse" width="100" height="9"><rect width="100" height="9" fill="#5e4232"/><rect y="1" width="100" height="5" fill="#8c5c40"/></pattern></defs><rect x="-5" y="-5" width="110" height="110" fill="url(#wood)"/><rect x="-5" y="-5" width="110" height="19" fill="#383230"/><path d="M-5 105 L-3 76 Q8 64 30 62 L64 62 Q92 64 104 76 L104 105Z" fill="#1e2a48"/><path d="M28 62 L60 62 L54 105 L35 105Z" fill="#eaf0f4"/><rect x="35" y="50" width="18" height="14" fill="#c89a80"/><ellipse cx="44" cy="36" rx="18" ry="25" fill="#d6a88e"/><ellipse cx="44" cy="14" rx="15" ry="6" fill="#c4ac8a"/><path d="M35 33 L41 33 M48 33 L54 33" stroke="#6a4a3a" stroke-width="1.4"/><path d="M37 47 Q44 51 51 47" stroke="#8a5a50" stroke-width="1.4" fill="none"/></g></svg></div>
</div>
<div class="t" style="left:195.80px;top:152.85px;font-size:7.26px;color:#1f76c4;transform:scaleX(0.919);font-weight:bold;z-index:5">Професорсько-викладацький&nbsp; склад кафедри психології</div><div class="t" style="left:272.60px;top:160.61px;font-size:5.54px;color:#1f76c4;font-weight:bold;z-index:5">(2021/22 н.р.)</div><div class="a" style="left:47px;top:195px;width:221.00px;height:166.50px;transform-origin:0 0;transform:scale(0.2172,0.2120)">
<div class="a" style="left:0;top:0;width:221.00px;height:166.50px;background:#fff"></div>
<div class="a" style="left:4.70px;top:22.70px;width:39.30px;height:54.20px;z-index:1;overflow:hidden"><svg width="100%" height="100%" viewBox="0 0 100 100" preserveAspectRatio="none" style="display:block"><g filter="url(#pb)"><rect x="-5" y="-5" width="110" height="110" fill="#e9e9e7"/><ellipse cx="50" cy="28" rx="27" ry="22" fill="#7a6856"/><ellipse cx="50" cy="44" rx="36" ry="16" fill="#76665a"/><ellipse cx="22" cy="46" rx="12" ry="14" fill="#86766a"/><ellipse cx="78" cy="46" rx="12" ry="14" fill="#86766a"/><rect x="43" y="40" width="14" height="16" fill="#d8b4a4"/><path d="M2 104 L3 64 Q8 56 26 55 L74 55 Q92 57 97 64 L98 104Z" fill="#1a1e32"/><path d="M26 57 L47 67 L50 62 L53 67 L74 57 L64 52 L50 58 L36 52Z" fill="#f6f6f4"/><path d="M46 64 L50 86 L54 64Z" fill="#ececec"/><ellipse cx="50" cy="29" rx="14" ry="15" fill="#e2c2b2"/><path d="M42 27 L47 27 M53 27 L58 27" stroke="#7a5a50" stroke-width="1.4"/><path d="M46 37 L54 37" stroke="#b87a7a" stroke-width="1.4"/></g></svg></div>
<div class="a" style="left:47.90px;top:17.50px;width:38.50px;height:57.10px;z-index:1;overflow:hidden"><svg width="100%" height="100%" viewBox="0 0 100 100" preserveAspectRatio="none" style="display:block"><g filter="url(#pb)"><rect x="-5" y="-5" width="110" height="110" fill="#b06c3c"/><rect x="-5" y="-5" width="16" height="110" fill="#94562c"/><rect x="34" y="-5" width="2" height="60" fill="#8a5230"/><rect x="82" y="-5" width="23" height="110" fill="#a4602f"/><rect x="-5" y="38" width="30" height="50" rx="4" fill="#1c1f22"/><path d="M3 97 L4 62 Q6 47 30 45 L72 45 Q93 47 95 62 L96 97Z" fill="#ededec"/><path d="M20 72 L20 88 M78 72 L80 88" stroke="#cacaca" stroke-width="2"/><ellipse cx="64" cy="89" rx="15" ry="5" fill="#c28a72"/><rect x="47" y="40" width="17" height="8" fill="#c08a70"/><ellipse cx="56" cy="33" rx="16" ry="14" fill="#c8957a"/><path d="M40 28 Q40 16 56 16 Q72 16 72 28 Q64 22 56 22 Q48 22 40 28Z" fill="#2e2620"/><path d="M47 31 L53 31 M59 31 L65 31" stroke="#5a3a30" stroke-width="1.6"/><rect x="-5" y="95" width="110" height="10" fill="#f1f1f1"/></g></svg></div>
<div class="a" style="left:86.70px;top:26.40px;width:43.00px;height:58.80px;z-index:1;overflow:hidden"><svg width="100%" height="100%" viewBox="0 0 100 100" preserveAspectRatio="none" style="display:block"><g filter="url(#pb)"><rect x="-5" y="-5" width="110" height="110" fill="#84878a"/><rect x="-5" y="-5" width="60" height="18" fill="#a4a6a8"/><rect x="55" y="-5" width="50" height="110" fill="#b08656"/><rect x="56" y="-5" width="3" height="80" fill="#7e5a3a"/><path d="M10 88 Q8 40 20 24 Q34 8 52 10 Q74 12 80 34 Q86 60 82 86 L62 86 L62 40 L30 40 L30 88Z" fill="#c8a67a"/><ellipse cx="48" cy="50" rx="22" ry="21" fill="#e9cab8"/><path d="M24 36 Q40 24 72 34 L70 26 Q50 14 26 28Z" fill="#c8a67a"/><path d="M37 46 L44 46 M52 46 L59 46" stroke="#9a7a6a" stroke-width="1.4"/><path d="M44 60 L54 60" stroke="#c08a88" stroke-width="1.4"/><path d="M-5 105 L-5 84 L100 84 L105 105Z" fill="#262222"/><path d="M26 105 L30 80 L64 80 L66 105Z" fill="#dfe3e6"/></g></svg></div>
<div class="a" style="left:129.70px;top:18.40px;width:40.50px;height:58.10px;z-index:1;overflow:hidden"><svg width="100%" height="100%" viewBox="0 0 100 100" preserveAspectRatio="none" style="display:block"><defs><pattern id="dots" patternUnits="userSpaceOnUse" width="7.4" height="5.2"><rect width="7.4" height="5.2" fill="#f4efef"/><rect x="1.6" y="1.2" width="4.0" height="2.8" fill="#b23a4e"/></pattern></defs><rect x="-5" y="-5" width="110" height="110" fill="url(#dots)"/><g filter="url(#pb)"><ellipse cx="57" cy="40" rx="29" ry="41" fill="#46281b"/><path d="M-5 105 L-2 62 Q5 46 30 42 L82 42 Q100 48 104 62 L104 105Z" fill="#1c1c1e"/><path d="M40 60 L48 100 M60 55 L70 100" stroke="#3a3a3c" stroke-width="2"/><ellipse cx="84" cy="80" rx="6" ry="12" fill="#4a2a1c"/><rect x="48" y="34" width="14" height="10" fill="#c89478"/><ellipse cx="55" cy="26" rx="16" ry="14" fill="#dcac90"/><path d="M47 24 L53 24 M58 24 L64 24" stroke="#5a3a30" stroke-width="1.4"/></g></svg></div>
<div class="a" style="left:170.20px;top:26.40px;width:43.50px;height:58.10px;z-index:1;overflow:hidden"><svg width="100%" height="100%" viewBox="0 0 100 100" preserveAspectRatio="none" style="display:block"><g filter="url(#pb)"><rect x="-5" y="-5" width="110" height="110" fill="#2c3b98"/><rect x="20" y="-5" width="4" height="110" fill="#3848a4"/><rect x="70" y="-5" width="5" height="110" fill="#24338e"/><ellipse cx="50" cy="38" rx="38" ry="30" fill="#c49c6a"/><ellipse cx="78" cy="56" rx="16" ry="14" fill="#b8925c"/><path d="M-5 105 L-3 68 Q8 56 30 55 L75 55 Q96 58 104 70 L104 105Z" fill="#141418"/><path d="M20 50 L64 50 L62 70 L44 94 L26 72Z" fill="#d4202c"/><ellipse cx="44" cy="36" rx="20" ry="17" fill="#e4c2ae"/><path d="M34 32 L41 32 M48 32 L55 32" stroke="#7a6a80" stroke-width="1.4"/><path d="M39 44 L49 44" stroke="#c07070" stroke-width="1.5"/></g></svg></div>
<div class="a" style="left:-0.40px;top:88.80px;width:37.70px;height:52.90px;z-index:1;overflow:hidden"><svg width="100%" height="100%" viewBox="0 0 100 100" preserveAspectRatio="none" style="display:block"><g filter="url(#pb)"><defs><linearGradient id="g6" x1="0" x2="1"><stop offset="0" stop-color="#c2d2ae"/><stop offset="0.35" stop-color="#8eae72"/><stop offset="0.6" stop-color="#4e7a3c"/><stop offset="1" stop-color="#3a5e2e"/></linearGradient></defs><rect x="-5" y="-5" width="110" height="110" fill="url(#g6)"/><rect x="-5" y="-5" width="110" height="10" fill="#1e281e"/><ellipse cx="14" cy="40" rx="14" ry="18" fill="#d6dcc6"/><ellipse cx="50" cy="47" rx="21" ry="30" fill="#33241c"/><path d="M10 105 L12 84 Q20 75 35 75 L68 75 Q88 77 90 86 L92 105Z" fill="#c02232"/><path d="M32 78 L70 78 L68 105 L34 105Z" fill="#151515"/><rect x="-5" y="91" width="110" height="14" fill="#8a6a4a"/><rect x="10" y="91" width="82" height="14" fill="#151515"/><rect x="10" y="91" width="20" height="14" fill="#c02232"/><rect x="70" y="91" width="22" height="14" fill="#c02232"/><ellipse cx="49" cy="48" rx="13" ry="15" fill="#d4a48a"/><path d="M38 43 L60 43" stroke="#2a2020" stroke-width="2"/></g></svg></div>
<div class="a" style="left:37.70px;top:106.80px;width:38.20px;height:51.00px;z-index:2;overflow:hidden"><svg width="100%" height="100%" viewBox="0 0 100 100" preserveAspectRatio="none" style="display:block"><g filter="url(#pb)"><rect x="-5" y="-5" width="110" height="110" fill="#dcd7cf"/><rect x="-5" y="78" width="22" height="27" fill="#e6da9c"/><ellipse cx="25" cy="60" rx="13" ry="6" fill="#b4b8aa"/><ellipse cx="52" cy="36" rx="22" ry="30" fill="#6a4a34"/><path d="M8 105 L12 68 Q18 56 40 56 L80 56 Q102 60 104 72 L104 105Z" fill="#d4662a"/><path d="M62 30 Q76 50 70 80 Q66 95 74 100" stroke="#6a4a34" stroke-width="9" fill="none"/><ellipse cx="48" cy="34" rx="15" ry="17" fill="#e6c2a2"/><path d="M40 31 L46 31 M51 31 L57 31" stroke="#6a4a3a" stroke-width="1.4"/><path d="M43 41 L53 41" stroke="#b07060" stroke-width="1.4"/></g></svg></div>
<div class="a" style="left:72.00px;top:89.30px;width:41.80px;height:52.40px;z-index:1;overflow:hidden"><svg width="100%" height="100%" viewBox="0 0 100 100" preserveAspectRatio="none" style="display:block"><g filter="url(#pb)"><rect x="-5" y="-5" width="110" height="110" fill="#c6b29c"/><rect x="12" y="48" width="16" height="24" fill="#a67656"/><rect x="-5" y="88" width="110" height="17" fill="#d6c0aa"/><path d="M30 60 Q28 20 45 8 Q62 4 64 30 Q66 50 58 60Z" fill="#d8d0c8"/><path d="M24 92 L26 54 Q34 42 56 42 L80 44 Q92 52 90 92Z" fill="#1e1a22"/><ellipse cx="50" cy="26" rx="10" ry="13" fill="#e4bca6"/><rect x="36" y="64" width="22" height="31" fill="#7a2430"/><ellipse cx="56" cy="86" rx="10" ry="6" fill="#d8b0a0"/></g></svg></div>
<div class="a" style="left:108.80px;top:106.80px;width:35.80px;height:51.50px;z-index:3;overflow:hidden"><svg width="100%" height="100%" viewBox="0 0 100 100" preserveAspectRatio="none" style="display:block"><g filter="url(#pb)"><defs><linearGradient id="g9" x1="0" x2="1"><stop offset="0" stop-color="#d6acd2"/><stop offset="1" stop-color="#e9c6d6"/></linearGradient></defs><rect x="-5" y="-5" width="110" height="110" fill="url(#g9)"/><ellipse cx="45" cy="42" rx="40" ry="28" fill="#ae9686"/><ellipse cx="20" cy="60" rx="14" ry="14" fill="#a48e80"/><path d="M-5 105 L-3 72 Q10 62 35 62 L70 62 Q96 64 104 76 L104 105Z" fill="#6e7078"/><path d="M34 70 L70 70 L66 105 L38 105Z" fill="#1e3440"/><ellipse cx="47" cy="50" rx="18" ry="20" fill="#dfb6a6"/><path d="M38 46 L45 46 M51 46 L58 46" stroke="#7a5a50" stroke-width="1.4"/><path d="M43 60 L53 60" stroke="#c07080" stroke-width="1.6"/></g></svg></div>
<div class="a" style="left:142.40px;top:87.10px;width:40.30px;height:53.20px;z-index:1;overflow:hidden"><svg width="100%" height="100%" viewBox="0 0 100 100" preserveAspectRatio="none" style="display:block"><g filter="url(#pb)"><rect x="-5" y="-5" width="110" height="110" fill="#a2d7cf"/><ellipse cx="54" cy="42" rx="19" ry="18" fill="#221a1a"/><ellipse cx="66" cy="62" rx="9" ry="14" fill="#221a1a"/><path d="M-5 105 L-3 80 Q8 71 35 71 L75 71 Q98 73 104 82 L104 105Z" fill="#d42a36"/><rect x="46" y="60" width="16" height="13" fill="#cc9a84"/><ellipse cx="53" cy="50" rx="15" ry="17" fill="#dcae98"/><path d="M45 46 L51 46 M56 46 L62 46" stroke="#3a2a2a" stroke-width="1.4"/></g></svg></div>
<div class="a" style="left:180.60px;top:102.60px;width:42.80px;height:54.80px;z-index:2;overflow:hidden"><svg width="100%" height="100%" viewBox="0 0 100 100" preserveAspectRatio="none" style="display:block"><g filter="url(#pb)"><defs><pattern id="wood" patternUnits="userSpaceOnUse" width="100" height="9"><rect width="100" height="9" fill="#5e4232"/><rect y="1" width="100" height="5" fill="#8c5c40"/></pattern></defs><rect x="-5" y="-5" width="110" height="110" fill="url(#wood)"/><rect x="-5" y="-5" width="110" height="19" fill="#383230"/><path d="M-5 105 L-3 76 Q8 64 30 62 L64 62 Q92 64 104 76 L104 105Z" fill="#1e2a48"/><path d="M28 62 L60 62 L54 105 L35 105Z" fill="#eaf0f4"/><rect x="35" y="50" width="18" height="14" fill="#c89a80"/><ellipse cx="44" cy="36" rx="18" ry="25" fill="#d6a88e"/><ellipse cx="44" cy="14" rx="15" ry="6" fill="#c4ac8a"/><path d="M35 33 L41 33 M48 33 L54 33" stroke="#6a4a3a" stroke-width="1.4"/><path d="M37 47 Q44 51 51 47" stroke="#8a5a50" stroke-width="1.4" fill="none"/></g></svg></div>
<div class="a" style="left:22px;top:5px;width:189px;height:5px;background:repeating-linear-gradient(90deg,#8ab4e0 0 9px,#c6dcf2 9px 11px,#9cc0e6 11px 20px,#e4eef8 20px 24px);z-index:5"></div><div class="a" style="left:99px;top:12px;width:36px;height:4px;background:repeating-linear-gradient(90deg,#9cc0e6 0 7px,#e4eef8 7px 9px);z-index:5"></div></div>
<div class="a" style="left:469.40px;top:209.00px;width:1.60px;height:10.80px;background:#5a5a5a;border-radius:0.8px"></div>
<div class="a" style="left:472.90px;top:184.00px;width:107.60px;height:60.60px;overflow:hidden"><svg width="107.60" height="60.60" viewBox="0 0 107.60 60.60" style="display:block"><defs><filter id="vb" x="-5%" y="-5%" width="110%" height="110%"><feGaussianBlur stdDeviation="0.9"/></filter></defs><g filter="url(#vb)"><rect x="-3" y="-3" width="115" height="70" fill="#f4f2f0"/><rect x="20" y="-3" width="27" height="42" fill="#fdfdfd"/><rect x="72" y="-3" width="40" height="42" fill="#fbfbfb"/><path d="M5 -3 L21 -3 L19 38 L12 42 L9 40 Z" fill="#aad3c6"/><path d="M9 -3 L13 -3 L14 40 L11 40Z" fill="#8cc0b0"/><path d="M16 -3 L18 -3 L17 38 L15.5 38Z" fill="#94c4b4"/><path d="M46 -3 L61 -3 L59 40 L50 40 Z" fill="#acd3c6"/><path d="M51 -3 L55 -3 L55 40 L52 40Z" fill="#90c2b2"/><path d="M60 -3 L73 -3 L72 42 L60 42Z" fill="#ece2e4"/><path d="M64 -3 L66 -3 L66 42 L64 42Z" fill="#ddd0d4"/><rect x="-3" y="-3" width="5" height="48" fill="#ebe4e6"/><path d="M-0.5 46 L-0.5 39.0 Q-0.5 35.0 3.5 35.0 Q7.5 35.0 7.5 39.0 L7.5 46Z" fill="#e9e4ea"/><ellipse cx="3.5" cy="31.4" rx="3.0" ry="3.8" fill="#b8a8a0"/><ellipse cx="3.5" cy="31.9" rx="2.2" ry="3.0" fill="#d8c8c8"/><path d="M13.0 46 L13.0 37.4 Q13.0 33.4 19.0 33.4 Q25.0 33.4 25.0 37.4 L25.0 46Z" fill="#c8c47a"/><ellipse cx="19.0" cy="29.8" rx="3.0" ry="3.8" fill="#c8a060"/><ellipse cx="19.0" cy="30.3" rx="2.2" ry="3.0" fill="#d4a888"/><path d="M26.4 46 L26.4 38.2 Q26.4 34.2 31.4 34.2 Q36.4 34.2 36.4 38.2 L36.4 46Z" fill="#25222c"/><ellipse cx="31.4" cy="30.6" rx="3.0" ry="3.8" fill="#3a2a26"/><ellipse cx="31.4" cy="31.1" rx="2.2" ry="3.0" fill="#c89a80"/><path d="M29.9 46 L29.9 36.6 Q29.9 32.6 36.4 32.6 Q42.9 32.6 42.9 36.6 L42.9 46Z" fill="#a9b4c4"/><ellipse cx="36.4" cy="29.0" rx="3.0" ry="3.8" fill="#d8c0b0"/><ellipse cx="36.4" cy="29.5" rx="2.2" ry="3.0" fill="#cfae9a"/><path d="M44.3 46 L44.3 38.0 Q44.3 34.0 51.8 34.0 Q59.3 34.0 59.3 38.0 L59.3 46Z" fill="#5e327e"/><ellipse cx="51.8" cy="30.4" rx="3.0" ry="3.8" fill="#b87a4a"/><ellipse cx="51.8" cy="30.9" rx="2.2" ry="3.0" fill="#d09a7a"/><path d="M60.2 46 L60.2 37.8 Q60.2 33.8 65.7 33.8 Q71.2 33.8 71.2 37.8 L71.2 46Z" fill="#ead8d4"/><ellipse cx="65.7" cy="30.2" rx="3.0" ry="3.8" fill="#d8b070"/><ellipse cx="65.7" cy="30.7" rx="2.2" ry="3.0" fill="#dcb890"/><path d="M66.6 46 L66.6 35.0 Q66.6 31.0 75.1 31.0 Q83.6 31.0 83.6 35.0 L83.6 46Z" fill="#3c303a"/><ellipse cx="75.1" cy="27.4" rx="3.0" ry="3.8" fill="#2e2022"/><ellipse cx="75.1" cy="27.9" rx="2.2" ry="3.0" fill="#d0a088"/><path d="M84.4 46 L84.4 33.7 Q84.4 29.7 95.4 29.7 Q106.4 29.7 106.4 33.7 L106.4 46Z" fill="#dde0e2"/><ellipse cx="95.4" cy="26.1" rx="3.0" ry="3.8" fill="#6a5a50"/><ellipse cx="95.4" cy="26.6" rx="2.2" ry="3.0" fill="#c09078"/><rect x="71.5" y="29" width="6" height="3.5" fill="#18181c"/><path d="M-3 41 L112 41.6 L112 45 L-3 44.6Z" fill="#dccbc8"/><path d="M-3 44.6 L112 45 L112 64 L-3 64Z" fill="#8a4c3a"/><rect x="66" y="45" width="46" height="20" fill="#8c5838"/><rect x="66" y="45" width="0.8" height="20" fill="#5e3420"/><path d="M-3 48.3 L37 48.3 L37 52.7 L-3 52.7Z" fill="#e4d4d4"/><path d="M-3 52.7 L37 52.7 L37 64 L-3 64Z" fill="#9a6048"/></g></svg></div>
<div class="a" style="left:472.90px;top:237.20px;width:84.50px;height:7.10px;background:rgba(42,26,22,0.72)"></div>
<div class="a" style="left:474.40px;top:241.60px;width:0.90px;height:1.40px;background:#e6e6e6"></div>
<div class="a" style="left:475.85px;top:240.80px;width:0.90px;height:2.20px;background:#e6e6e6"></div>
<div class="a" style="left:477.30px;top:240.00px;width:0.90px;height:3.00px;background:#e6e6e6"></div>
<div class="a" style="left:478.75px;top:239.20px;width:0.90px;height:3.80px;background:#e6e6e6"></div>
<div class="t" style="left:481.60px;top:238.22px;font-size:5.41px;color:#e8e8e8;">Хмельницький інститут МАУП</div><svg class="a" style="left:53.2px;top:398.6px" width="11" height="11.5" viewBox="0 0 11 11.5"><rect x="3.4" y="0.6" width="4.4" height="6.8" rx="2.2" fill="#a8a8a8"/><path d="M2 5.2 Q2 9 5.6 9 Q9.2 9 9.2 5.2" stroke="#a8a8a8" stroke-width="0.9" fill="none"/><path d="M5.6 9 L5.6 10.8" stroke="#a8a8a8" stroke-width="0.9"/><path d="M0.8 10.8 L10.2 0.8" stroke="#d2303a" stroke-width="1.0"/></svg>
<svg class="a" style="left:73.8px;top:403.6px" width="3" height="2"><path d="M0.3 1.7 L1.5 0.4 L2.7 1.7" stroke="#aaa" stroke-width="0.6" fill="none"/></svg>
<div class="t" style="left:41.00px;top:411.40px;font-size:6.15px;color:#d4d4d4;transform:scaleX(0.867);">Включить звук</div><svg class="a" style="left:99.6px;top:398.6px" width="12" height="11.5" viewBox="0 0 12 11.5"><rect x="0.6" y="2.6" width="7.2" height="6.4" rx="1" fill="#cacaca"/><path d="M8 5 L11 3.2 L11 8.4 L8 6.6Z" fill="#cacaca"/><path d="M1 10.8 L9.6 0.8" stroke="#d2303a" stroke-width="1.0"/></svg>
<svg class="a" style="left:124.3px;top:403.6px" width="3" height="2"><path d="M0.3 1.7 L1.5 0.4 L2.7 1.7" stroke="#aaa" stroke-width="0.6" fill="none"/></svg>
<div class="t" style="left:89.00px;top:411.40px;font-size:6.15px;color:#d4d4d4;transform:scaleX(0.838);">Начать видео</div><svg class="a" style="left:202.0px;top:400.6px" width="11.5" height="9" viewBox="0 0 11.5 9"><circle cx="3.9" cy="2.4" r="1.9" fill="#d0d0d0"/><circle cx="8.4" cy="2.6" r="1.6" fill="#d0d0d0"/><path d="M0.6 8.4 Q0.6 5.2 3.9 5.2 Q7.2 5.2 7.2 8.4Z" fill="#d0d0d0"/><path d="M7.9 8.4 L10.9 8.4 Q10.9 5.5 8.4 5.5 Q7.6 5.5 7.2 5.8 Q7.9 6.8 7.9 8.4Z" fill="#d0d0d0"/></svg>
<div class="t" style="left:215.00px;top:400.60px;font-size:6.15px;color:#9aa0b0;transform:scaleX(0.877);">8</div><svg class="a" style="left:229.3px;top:403.6px" width="3" height="2"><path d="M0.3 1.7 L1.5 0.4 L2.7 1.7" stroke="#aaa" stroke-width="0.6" fill="none"/></svg>
<div class="t" style="left:195.40px;top:411.40px;font-size:6.15px;color:#d4d4d4;transform:scaleX(0.879);">Участники</div><svg class="a" style="left:250.0px;top:400.2px" width="10.5" height="9" viewBox="0 0 10.5 9"><rect x="0.2" y="0.2" width="10" height="6.6" rx="1.4" fill="#cfcfcf"/><path d="M2.4 6.4 L2.4 8.8 L5 6.4Z" fill="#cfcfcf"/></svg>
<svg class="a" style="left:268.0px;top:403.6px" width="3" height="2"><path d="M0.3 1.7 L1.5 0.4 L2.7 1.7" stroke="#aaa" stroke-width="0.6" fill="none"/></svg>
<div class="t" style="left:250.70px;top:411.40px;font-size:6.15px;color:#d4d4d4;transform:scaleX(0.874);">Чат</div><div class="a" style="left:298.70px;top:400.60px;width:10.30px;height:7.60px;background:#22c55e;border-radius:1.2px"></div>
<svg class="a" style="left:301.8px;top:401.8px" width="4" height="5.4"><path d="M2 0.2 L3.8 2.2 L2.6 2.2 L2.6 5.2 L1.4 5.2 L1.4 2.2 L0.2 2.2Z" fill="#0f2a14"/></svg>
<div class="t" style="left:277.30px;top:411.40px;font-size:6.15px;color:#22c55e;transform:scaleX(0.840);">Демонстрация экрана</div><div class="a" style="left:345.80px;top:399.80px;width:9.40px;height:9.40px;border-radius:50%;background:#d6d6d6"></div>
<div class="a" style="left:347.30px;top:401.30px;width:6.40px;height:6.40px;border-radius:50%;background:#a9a9a9;border:0.6px solid #7a7a7a"></div>
<div class="t" style="left:342.30px;top:411.40px;font-size:6.15px;color:#d4d4d4;transform:scaleX(0.814);">Запись</div><svg class="a" style="left:379.8px;top:399.6px" width="9" height="9.5" viewBox="0 0 9 9.5"><circle cx="4.2" cy="5.2" r="3.9" fill="#cfcfcf"/><path d="M2.6 4.4 Q2.6 7 4.2 7 Q5.8 7 5.8 4.4" fill="none" stroke="#3a3a3a" stroke-width="0.6"/><path d="M7.6 0.2 L7.6 2.6 M6.4 1.4 L8.8 1.4" stroke="#cfcfcf" stroke-width="0.7"/></svg>
<div class="t" style="left:374.70px;top:411.40px;font-size:6.15px;color:#d4d4d4;transform:scaleX(0.838);">Реакции</div><svg class="a" style="left:416.3px;top:401.0px" width="8" height="8" viewBox="0 0 8 8"><path d="M1 3 L1 1.6 Q1 1 1.6 1 L4.6 1 M7 5 L7 6.4 Q7 7 6.4 7 L3.4 7" stroke="#cfcfcf" stroke-width="0.9" fill="none"/><path d="M4.4 0 L6 1 L4.4 2Z M3.6 6 L2 7 L3.6 8Z" fill="#cfcfcf"/><circle cx="6.6" cy="2.4" r="0.8" fill="#cfcfcf"/><circle cx="1.4" cy="5.6" r="0.8" fill="#cfcfcf"/></svg>
<div class="t" style="left:405.00px;top:411.40px;font-size:6.15px;color:#d4d4d4;transform:scaleX(0.860);">Приложения</div><svg class="a" style="left:460.0px;top:400.2px" width="10" height="9" viewBox="0 0 10 9"><rect x="0.5" y="0.5" width="8.6" height="6.6" rx="1" stroke="#cfcfcf" stroke-width="0.9" fill="none"/><rect x="4.4" y="5.6" width="5" height="2.6" fill="#cfcfcf"/></svg>
<div class="t" style="left:442.80px;top:411.40px;font-size:6.15px;color:#d4d4d4;transform:scaleX(0.868);">Доски сообщений</div><div class="a" style="left:551.40px;top:402.90px;width:26.50px;height:11.50px;background:#d3262d;border-radius:2.4px"></div>
<div class="t" style="left:557.00px;top:405.40px;font-size:6.15px;color:#fbeaea;transform:scaleX(0.760);font-weight:bold">Выйти</div></div></body></html>
